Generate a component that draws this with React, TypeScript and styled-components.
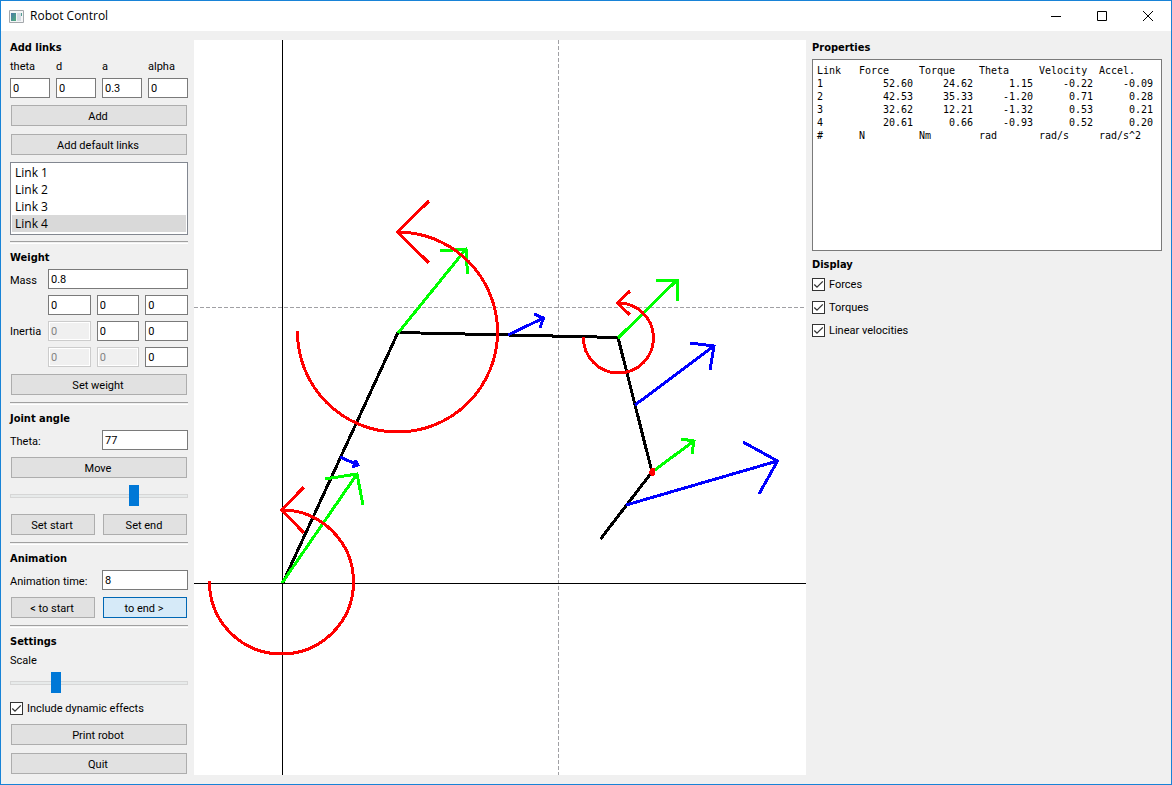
import React, { useState } from "react";
import styled, { createGlobalStyle, css } from "styled-components";

const GlobalStyle = createGlobalStyle`
  *, *::before, *::after { box-sizing: border-box; }
  body {
    margin: 0;
    background: #f0f0f0;
    color: #000;
    font: 11px/15px Roboto, "DejaVu Sans Condensed", sans-serif;
  }
`;

const Window = styled.div`
  display: flex;
  flex-direction: column;
  min-height: 100vh;
  border: 1px solid #1883d7;
  background: #f0f0f0;
`;

const TitleBar = styled.header`
  display: flex;
  align-items: center;
  height: 30px;
  padding-left: 8px;
  background: #fff;
`;

const Title = styled.h1`
  flex: 1;
  margin: 0 0 0 6px;
  font: 400 12px/16px "Open Sans", sans-serif;
`;

const CaptionButton = styled.button`
  display: grid;
  place-items: center;
  width: 46px;
  height: 30px;
  padding: 0;
  border: 0;
  background: transparent;
`;

const Body = styled.main`
  flex: 1;
  display: flex;
  gap: 6px;
  padding: 9px;
`;

const Sidebar = styled.div`
  flex: 0 0 178px;
  display: flex;
  flex-direction: column;
  gap: 6px;
`;

const SidePanel = styled(Sidebar)`
  flex-basis: 350px;
`;

const Viewport = styled.section`
  flex: 1;
  min-width: 0;
  background: #fff;
`;

const Drawing = styled.svg`
  display: block;
  width: 100%;
  height: 0;
  min-height: 100%;
`;

const Heading = styled.h2`
  height: 13px;
  margin: 0;
  font: 700 11px/15px "DejaVu Sans Condensed", "Open Sans", sans-serif;
`;

const Divider = styled.hr`
  width: 100%;
  height: 3px;
  margin: 0;
  border: 0;
  border-top: 1px solid #a0a0a0;
  border-bottom: 1px solid #fff;
  background: #f0f0f0;
`;

const Columns = styled.div<{ $count: number }>`
  display: grid;
  grid-template-columns: repeat(${(p) => p.$count}, minmax(0, 1fr));
  gap: 6px;
  align-items: center;
`;

const WeightGrid = styled.div`
  display: grid;
  grid-template-columns: 32px repeat(3, minmax(0, 1fr));
  gap: 6px;
  align-items: center;
`;

const MatrixLabel = styled.span`
  grid-column: 1;
  grid-row: 2 / span 3;
`;

const Label = styled.label`
  height: 13px;
  white-space: nowrap;
`;

const TextBox = styled.input<{ $span?: number }>`
  width: 100%;
  height: 20px;
  padding: 1px 2px 0;
  border: 1px solid #7a7a7a;
  background: #fff;
  color: #000;
  font: inherit;
  ${(p) => p.$span && css`grid-column: span ${p.$span};`}

  &:disabled {
    border-color: #ccc;
    background: #f0f0f0;
    box-shadow: inset 0 0 0 1px #fff;
    color: #838383;
  }
`;

const PushButton = styled.button<{ $active?: boolean }>`
  height: 21px;
  margin: 1px;
  padding: 1px 2px 0 0;
  border: 1px solid ${(p) => (p.$active ? "#0067b4" : "#adadad")};
  background: ${(p) => (p.$active ? "#d6eaf8" : "#e1e1e1")};
  color: #000;
  font: inherit;
`;

const ListBox = styled.ul`
  margin: 0;
  padding: 1px 1px 2px;
  border: 1px solid #828790;
  background: #fff;
  list-style: none;
  font: 12px/17px "Open Sans", sans-serif;
`;

const ListItem = styled.li<{ $selected: boolean }>`
  padding: 0 3px;
  background: ${(p) => (p.$selected ? "#d9d9d9" : "transparent")};
`;

const Slider = styled.input`
  appearance: none;
  width: 100%;
  height: 22px;
  margin: 0;
  background: transparent;

  &::-webkit-slider-runnable-track {
    height: 4px;
    border: 1px solid #d6d6d6;
    background: #e7eaea;
  }

  &::-webkit-slider-thumb {
    appearance: none;
    width: 10px;
    height: 21px;
    margin-top: -10px;
    border: 0;
    border-radius: 0;
    background: #0078d7;
  }
`;

const CheckRow = styled.label`
  display: flex;
  align-items: center;
  gap: 4px;
  height: 17px;
`;

const CheckBox = styled.span`
  display: grid;
  width: 13px;
  height: 13px;

  & > * {
    grid-area: 1 / 1;
  }

  input {
    appearance: none;
    width: 13px;
    height: 13px;
    margin: 0;
    border: 1px solid #333;
    background: #fff;
  }

  svg {
    pointer-events: none;
  }

  input:not(:checked) + svg {
    display: none;
  }
`;

const Output = styled.div`
  height: 192px;
  padding: 4px 2px 4px 4px;
  border: 1px solid #7a7a7a;
  background: #fff;
`;

const Table = styled.table`
  table-layout: fixed;
  width: 342px;
  border-collapse: collapse;
  font: 10px/13px "DejaVu Sans Mono", monospace;
  white-space: nowrap;
`;

const Cell = styled.td<{ $numeric?: boolean }>`
  height: 13px;
  padding: ${(p) => (p.$numeric ? "0 6px 0 0" : "0")};
  text-align: ${(p) => (p.$numeric ? "right" : "left")};
  font-weight: 400;
`;

const WideCol = styled.col`
  width: 60px;
`;

const LinkCol = styled.col`
  width: 42px;
`;

const rows = [
  ["1", "52.60", "24.62", "1.15", "-0.22", "-0.09"],
  ["2", "42.53", "35.33", "-1.20", "0.71", "0.28"],
  ["3", "32.62", "12.21", "-1.32", "0.53", "0.21"],
  ["4", "20.61", "0.66", "-0.93", "0.52", "0.20"],
];
const columns = ["Link", "Force", "Torque", "Theta", "Velocity", "Accel."];
const units = ["#", "N", "Nm", "rad", "rad/s", "rad/s^2"];

const linkFields = [
  { id: "theta", value: "0" },
  { id: "d", value: "0" },
  { id: "a", value: "0.3" },
  { id: "alpha", value: "0" },
];

function Check({ label, checked, onChange }: { label: string; checked: boolean; onChange: (v: boolean) => void }) {
  return (
    <CheckRow>
      <CheckBox>
        <input type="checkbox" checked={checked} onChange={(e) => onChange(e.target.checked)} />
        <svg width="13" height="13" viewBox="0 0 13 13" fill="none" stroke="#333" strokeWidth="1.3">
          <path d="M2.3 6.5 5 9.2 10.8 3.4" />
        </svg>
      </CheckBox>
      {label}
    </CheckRow>
  );
}

const velocityPaths = [
  "M58-126 76-118M73-123 76-118 70-116",
  "M226-248 261.5-265M252-269 261.5-265 258-255",
  "M353-178 432-237M408-240 432-237 428-213",
  "M344-78 495.500-122M461-141 495.500-122 477-89",
];
const forcePaths = [
  "M0 0 75-109M43-104 75-109 81-78",
  "M116-250 184-334M158-332 184-334 185.500-309",
  "M336-245 395-303M374-302.5 395.5-302.5 395.5-282",
  "M370-111 412-142M399-144 412-142 410-129",
];
const torquePaths = [
  "M-72.500-2A72 72 0 1 0-.500-73M22-96-.500-73 22-50",
  "M15.500-252A100 100 0 1 0 115.500-351M147-382 115.500-351 147-320",
  "M301.500-246A35 35 0 1 0 335.500-280M348-292 335.500-280 348-268",
];

function RobotView({ forces, torques, velocities }: { forces: boolean; torques: boolean; velocities: boolean }) {
  return (
    <Drawing viewBox="-88 -543 612 735" fill="none" strokeWidth="3" shapeRendering="crispEdges" role="img" aria-label="Robot arm">
      <path d="M-88-275.500H524M276.500-543V192" stroke="#a0a0a4" strokeWidth="1" strokeDasharray="4 2" />
      <path d="M-88 .5H524M.5-543V192" stroke="#000" strokeWidth="1" />
      <path d="M.5.5 116-250.500 336-245.500 370-111 318.500-44" stroke="#000" />
      {velocities && velocityPaths.map((d) => <path key={d} d={d} stroke="#00f" />)}
      {forces && forcePaths.map((d) => <path key={d} d={d} stroke="#0f0" />)}
      {torques && torquePaths.map((d) => <path key={d} d={d} stroke="#f00" />)}
      {torques && <path d="M368-114 369-115H373V-109L372-107H369L367-109V-112L368-113z" fill="#f00" />}
    </Drawing>
  );
}

export default function App() {
  const [selected, setSelected] = useState(4);
  const [forces, setForces] = useState(true);
  const [torques, setTorques] = useState(true);
  const [velocities, setVelocities] = useState(true);
  const [dynamic, setDynamic] = useState(true);

  return (
    <>
      <GlobalStyle />
      <Window>
        <TitleBar>
          <svg width="15" height="13" viewBox="0 0 15 13">
            <defs>
              <linearGradient id="pane" x1="0" y1="0" x2="1" y2="1">
                <stop offset="0" stopColor="#4a78a8" />
                <stop offset="1" stopColor="#4fae7c" />
              </linearGradient>
            </defs>
            <path d="M.5.5H14.500V12.500H.5z" fill="#f4f5f6" stroke="#a4a8ac" />
            <path d="M2 3H7V11H2z" fill="url(#pane)" />
            <path d="M8 3H12V11H8z" fill="#d5dce4" />
            <path d="M12 3H13V6H12z" fill="#4f9c90" />
          </svg>
          <Title>Robot Control</Title>
          <CaptionButton aria-label="Minimize">
            <svg width="10" height="10" viewBox="0 0 10 10" stroke="#000"><path d="M0 5.500H10" /></svg>
          </CaptionButton>
          <CaptionButton aria-label="Maximize">
            <svg width="10" height="10" viewBox="0 0 10 10" stroke="#000" fill="none"><path d="M.5.5H9.500V9.500H.5z" /></svg>
          </CaptionButton>
          <CaptionButton aria-label="Close">
            <svg width="10" height="10" viewBox="0 0 10 10" stroke="#000"><path d="M0 0 10 10M10 0 0 10" /></svg>
          </CaptionButton>
        </TitleBar>

        <Body>
          <Sidebar>
            <Heading>Add links</Heading>
            <Columns $count={4}>
              {linkFields.map((f) => <Label key={f.id} htmlFor={f.id}>{f.id}</Label>)}
              {linkFields.map((f) => <TextBox key={f.id} id={f.id} defaultValue={f.value} />)}
            </Columns>
            <PushButton>Add</PushButton>
            <PushButton>Add default links</PushButton>
            <ListBox role="listbox" aria-label="Links">
              {[1, 2, 3, 4].map((n) => (
                <ListItem key={n} role="option" aria-selected={n === selected} $selected={n === selected} onClick={() => setSelected(n)}>
                  Link {n}
                </ListItem>
              ))}
            </ListBox>
            <Divider />

            <Heading>Weight</Heading>
            <WeightGrid>
              <Label htmlFor="mass">Mass</Label>
              <TextBox id="mass" defaultValue="0.8" $span={3} />
              <MatrixLabel id="inertia">Inertia</MatrixLabel>
              {[0, 1, 2].map((r) =>
                [0, 1, 2].map((c) => (
                  <TextBox key={`${r}${c}`} aria-labelledby="inertia" defaultValue="0" disabled={c < r} />
                ))
              )}
            </WeightGrid>
            <PushButton>Set weight</PushButton>
            <Divider />

            <Heading>Joint angle</Heading>
            <Columns $count={2}>
              <Label htmlFor="joint">Theta:</Label>
              <TextBox id="joint" defaultValue="77" />
            </Columns>
            <PushButton>Move</PushButton>
            <Slider type="range" min={-180} max={180} defaultValue={75} aria-label="Joint angle" />
            <Columns $count={2}>
              <PushButton>Set start</PushButton>
              <PushButton>Set end</PushButton>
            </Columns>
            <Divider />

            <Heading>Animation</Heading>
            <Columns $count={2}>
              <Label htmlFor="time">Animation time:</Label>
              <TextBox id="time" defaultValue="8" />
            </Columns>
            <Columns $count={2}>
              <PushButton>&lt; to start</PushButton>
              <PushButton $active>to end &gt;</PushButton>
            </Columns>
            <Divider />

            <Heading>Settings</Heading>
            <Label htmlFor="scale">Scale</Label>
            <Slider id="scale" type="range" min={0} max={100} defaultValue={24} />
            <Check label="Include dynamic effects" checked={dynamic} onChange={setDynamic} />
            <PushButton>Print robot</PushButton>
            <PushButton>Quit</PushButton>
          </Sidebar>

          <Viewport>
            <RobotView forces={forces} torques={torques} velocities={velocities} />
          </Viewport>

          <SidePanel>
            <Heading>Properties</Heading>
            <Output>
              <Table>
                <colgroup>
                  <LinkCol />
                  <WideCol /><WideCol /><WideCol /><WideCol /><WideCol />
                </colgroup>
                <thead>
                  <tr>{columns.map((c) => <Cell as="th" scope="col" key={c}>{c}</Cell>)}</tr>
                </thead>
                <tbody>
                  {rows.map((r) => (
                    <tr key={r[0]}>{r.map((v, i) => <Cell key={i} $numeric={i > 0}>{v}</Cell>)}</tr>
                  ))}
                  <tr>{units.map((u) => <Cell key={u}>{u}</Cell>)}</tr>
                </tbody>
              </Table>
            </Output>
            <Heading>Display</Heading>
            <Check label="Forces" checked={forces} onChange={setForces} />
            <Check label="Torques" checked={torques} onChange={setTorques} />
            <Check label="Linear velocities" checked={velocities} onChange={setVelocities} />
          </SidePanel>
        </Body>
      </Window>
    </>
  );
}
